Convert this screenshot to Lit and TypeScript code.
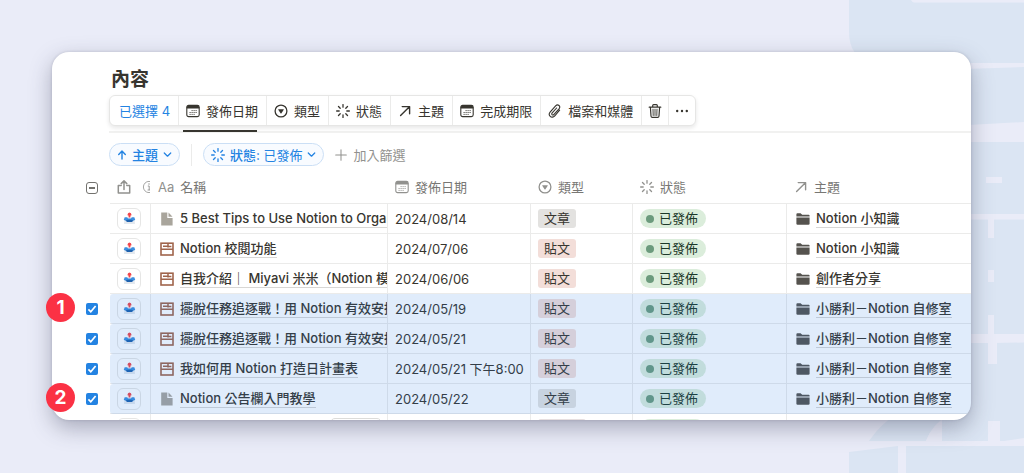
import { LitElement, html, svg, css, nothing } from "lit";
import { customElement, property } from "lit/decorators.js";

type Kind = "calendar" | "select" | "status" | "arrow" | "clip" | "trash" | "dots" | "share" | "info"
  | "up" | "down" | "plus" | "page" | "layout" | "folder" | "outbox";

const glyphs: Record<Kind, unknown> = {
  calendar: svg`<rect x=".8" y="1.4" width="12.4" height="11.2" rx="1.8" fill="none" stroke="currentColor" stroke-width="1.1"/>
    <path d="M.8 4.6V3.2Q.8 1.400 2.600 1.400H11.400Q13.200 1.400 13.200 3.200V4.600Z" fill="currentColor"/>
    <path d="M5.6 6.6h1M7.6 6.6h1M9.6 6.6h1M3.6 8.5h1M5.6 8.5h1M7.6 8.5h1M9.6 8.5h1M3.6 10.4h1M5.6 10.4h1M7.6 10.4h1" stroke="currentColor" stroke-width="1"/>`,
  select: svg`<circle cx="7" cy="7" r="5.9" fill="none" stroke="currentColor" stroke-width="1.3"/>
    <path d="M4.5 5.3h5a.3.3 0 0 1 .25.5L7.3 9.4a.4.4 0 0 1-.6 0L4.25 5.800a.3.3 0 0 1 .25-.5Z" fill="currentColor"/>`,
  status: svg`<path d="M7 .6v2.600M7 10.800v2.600M.6 7h2.600M10.800 7h2.600M2.500 2.500l1.700 1.700M9.800 9.800l1.700 1.700M2.500 11.500l1.700-1.700M9.800 4.200l1.700-1.700" stroke="currentColor" stroke-width="1.3" stroke-linecap="round"/>`,
  arrow: svg`<path d="M2.600 11.600L11.400 2.800M4.200 2.600H11.600V9.800" fill="none" stroke="currentColor" stroke-width="1.4" stroke-linecap="round" stroke-linejoin="round"/>`,
  clip: svg`<path d="M11.6 6.2L6.8 11.8C5.4 13.4 3.4 13.5 2.2 12.4C1 11.3 1 9.4 2.3 7.9L7.6 1.9C8.6.8 10.1.7 11 1.5C11.9 2.3 11.9 3.7 11 4.8L6 10.4C5.4 11.1 4.6 11.1 4.1 10.7C3.6 10.2 3.7 9.5 4.2 8.9L8.6 4" fill="none" stroke="currentColor" stroke-width="1.1" stroke-linecap="round"/>`,
  trash: svg`<path d="M1.200 3.200H12.800M4.700 3V1.600Q4.700.7 5.600.7H8.400Q9.300.7 9.300 1.600V3M2.400 3.400L3 12Q3.100 13.400 4.400 13.400H9.600Q10.900 13.400 11 12L11.600 3.400" fill="none" stroke="currentColor" stroke-width="1.2" stroke-linecap="round"/>
    <path d="M5 5.200L5.200 11.500M7 5.200V11.500M9 5.200L8.800 11.500" stroke="currentColor" stroke-width=".9" stroke-linecap="round"/>`,
  dots: svg`<circle cx="2.200" cy="7" r="1.200" fill="currentColor"/><circle cx="7" cy="7" r="1.200" fill="currentColor"/><circle cx="11.800" cy="7" r="1.200" fill="currentColor"/>`,
  share: svg`<path d="M4.200 5.600H1.300V13H12.700V5.600H9.800M7 9.400V1M4.200 3.600L7 .9L9.800 3.600" fill="none" stroke="currentColor" stroke-width="1.5" stroke-linecap="round" stroke-linejoin="round"/>`,
  info: svg`<circle cx="7" cy="7" r="5.600" fill="none" stroke="currentColor" stroke-width=".8"/>
    <path d="M5.800 6H7.200V10M5.600 10H8.800" fill="none" stroke="currentColor" stroke-width=".9"/><circle cx="7" cy="4" r=".7" fill="currentColor"/>`,
  up: svg`<path d="M7 12.600V1.600M2.400 6.200L7 1.500L11.600 6.200" fill="none" stroke="currentColor" stroke-width="2" stroke-linecap="round" stroke-linejoin="round"/>`,
  down: svg`<path d="M2 4.600L7 9.600L12 4.600" fill="none" stroke="currentColor" stroke-width="2" stroke-linecap="round" stroke-linejoin="round"/>`,
  plus: svg`<path d="M7 .8V13.200M.8 7H13.200" stroke="currentColor" stroke-width="1.2" stroke-linecap="round"/>`,
  page: svg`<path d="M1.200 .5H7.300V6H12.600V13.500H1.200Z" fill="currentColor"/><path d="M8.500 .6L12.500 4.700H8.500Z" fill="currentColor"/>`,
  layout: svg`<rect x="1" y="1.200" width="12" height="11.800" fill="none" stroke="currentColor" stroke-width="1.6"/>
    <path d="M1 7.200H13M8 1.400V5.400M3 4.300H8M8 4.600H11.400" stroke="currentColor" stroke-width="1.500"/>`,
  folder: svg`<path d="M.4 2.200Q.4 1.200 1.400 1.200H4.600L6.200 2.800H12.600Q13.600 2.800 13.600 3.800V4.600H.4Z" fill="currentColor"/>
    <path d="M.4 5.600H13.600V11.600Q13.600 12.800 12.400 12.800H1.600Q.4 12.800 .4 11.600Z" fill="currentColor"/>`,
  outbox: svg`<path d="M2 6.400H12L12.900 12Q12.900 12.900 12 12.900H2Q1.100 12.900 1.100 12Z" fill="#e3e8ee"/>
    <path d="M1.800 5.600H4.600L5.400 7H8.600L9.400 5.600H12.200L13.200 8.600Q11 9 10 10H4Q3 9 .8 8.600Z" fill="#3b8fe0"/>
    <path d="M2.600 8.800Q4 9.300 4.600 8.400H9.400Q10 9.300 11.400 8.800Q10.400 9.400 9.800 10.800H4.200Q3.600 9.400 2.600 8.800Z" fill="#1f62ad"/>
    <path d="M7 .6Q9 1 9.200 3.200Q9 3.900 8 3.900V5.800H6V3.900Q5 3.900 4.800 3.200Q5 1 7 .6Z" fill="#f2444b"/>`,
};

const icon = (kind: Kind, cls = "") =>
  html`<svg class="icon ${cls}" viewBox="0 0 14 14" aria-hidden="true">${glyphs[kind]}</svg>`;

interface Entry {
  name: string;
  mark: "page" | "layout";
  date: string;
  type: "文章" | "貼文";
  topic: string;
  picked: boolean;
}

const entries: Entry[] = [
  { name: "5 Best Tips to Use Notion to Organize", mark: "page", date: "2024/08/14", type: "文章", topic: "Notion 小知識", picked: false },
  { name: "Notion 校閱功能", mark: "layout", date: "2024/07/06", type: "貼文", topic: "Notion 小知識", picked: false },
  { name: "自我介紹｜ Miyavi 米米（Notion 模板", mark: "layout", date: "2024/06/06", type: "貼文", topic: "創作者分享", picked: false },
  { name: "擺脫任務追逐戰！用 Notion 有效安排", mark: "layout", date: "2024/05/19", type: "貼文", topic: "小勝利－Notion 自修室", picked: true },
  { name: "擺脫任務追逐戰！用 Notion 有效安排", mark: "layout", date: "2024/05/21", type: "貼文", topic: "小勝利－Notion 自修室", picked: true },
  { name: "我如何用 Notion 打造日計畫表", mark: "layout", date: "2024/05/21 下午8:00", type: "貼文", topic: "小勝利－Notion 自修室", picked: true },
  { name: "Notion 公告欄入門教學", mark: "page", date: "2024/05/22", type: "文章", topic: "小勝利－Notion 自修室", picked: true },
];

const actions: [Kind, string][] = [
  ["calendar", "發佈日期"], ["select", "類型"], ["status", "狀態"],
  ["arrow", "主題"], ["calendar", "完成期限"], ["clip", "檔案和媒體"],
];

const shared = css`
  * { box-sizing: border-box; }
  button { font: inherit; color: inherit; background: none; border: 0; padding: 0; margin: 0; }
  .icon { width: 14px; height: 14px; flex: none; display: block; }
`;

@customElement("content-toolbar")
export class ContentToolbar extends LitElement {
  static styles = [shared, css`
    :host { display: block; padding: 0 0 0 57px; }
    .bar {
      display: inline-flex; height: 31px; vertical-align: top; background: #fff;
      border: 1px solid #e6e6e5; border-radius: 6px; box-shadow: 0 2px 4px rgba(15, 15, 15, .1);
    }
    .item { display: flex; align-items: center; gap: 6px; padding: 0 8px 0 7px; border-left: 1px solid #ebebea; white-space: nowrap; }
    .count { color: #2383e2; padding: 0 8px 0 9px; border-left: 0; }
    .small { padding: 0 6px; }
    .tabs { height: 7px; border-bottom: 2px solid #f1f1f0; padding-left: 74px; display: flex; align-items: flex-end; }
    .current { width: 74px; height: 2px; background: #37352f; margin-bottom: -1px; }
    .filters { display: flex; align-items: center; padding-top: 10px; }
    .pill {
      display: flex; align-items: center; height: 23px; border-radius: 12px; padding: 0 7px;
      color: #2383e2; background: #f8fbff; border: 1px solid #cbdff5; gap: 5px; font-weight: 500; white-space: nowrap;
    }
    .value { font-weight: 400; }
    .rule { width: 1px; height: 22px; background: #ebebea; margin: 0 11px; }
    .chev { width: 9px; height: 9px; }
    .up { width: 10px; height: 10px; }
    .plus { width: 12px; height: 12px; }
    .add { display: flex; align-items: center; gap: 6px; color: #91918e; margin-left: 11px; }
  `];

  render() {
    return html`
      <div class="bar" role="toolbar" aria-label="已選擇 4">
        <button class="item count">已選擇 4</button>
        ${actions.map(([kind, label]) => html`<button class="item">${icon(kind)}${label}</button>`)}
        <button class="item small" aria-label="刪除">${icon("trash")}</button>
        <button class="item small" aria-label="更多">${icon("dots")}</button>
      </div>
      <div class="tabs"><div class="current"></div></div>
      <div class="filters">
        <button class="pill">${icon("up", "up")}主題${icon("down", "chev")}</button>
        <span class="rule"></span>
        <button class="pill">${icon("status")}<span>狀態: <span class="value">已發佈</span></span>${icon("down", "chev")}</button>
        <button class="add">${icon("plus", "plus")}加入篩選</button>
      </div>`;
  }
}

@customElement("content-table")
export class ContentTable extends LitElement {
  @property({ attribute: false }) rows: Entry[] = [];

  static styles = [shared, css`
    :host { display: block; }
    table { width: 100%; table-layout: fixed; border-collapse: separate; border-spacing: 0; }
    .c-pick { width: 58px; }
    .c-act { width: 40px; }
    .c-name { width: 237px; }
    .c-date { width: 143px; }
    .c-type { width: 102px; }
    .c-status { width: 154px; }
    th, td { padding: 0 8px; text-align: left; font-weight: 400; white-space: nowrap; overflow: hidden; border-bottom: 1px solid #ebebea; }
    th { height: 33px; color: #787774; }
    th .icon { color: #91918e; }
    td { height: 30px; padding: 0 7px; border-left: 1px solid #ebebea; }
    .titled { padding: 0 0 0 9px; }
    .pick { border: 0; padding: 0 0 0 34px; }
    .first { border-left: 0; padding: 0 0 0 7px; }
    .line { display: flex; align-items: center; gap: 6px; }
    .line.tight { gap: 11px; }
    .aa { color: #91918e; }
    .send {
      width: 24px; height: 22px; border: 1px solid #e6e6e5; border-radius: 6px;
      display: flex; align-items: center; justify-content: center;
    }
    .send .icon { width: 13px; height: 13px; }
    .link { color: inherit; text-decoration: none; font-weight: 500; line-height: 18px; border-bottom: 1px solid #d8d7d5; }
    .page { color: #a9a59c; }
    .layout { color: #a0654c; }
    .folder { color: #55534e; }
    .tag { display: block; width: max-content; padding: 0 6px; border-radius: 3px; line-height: 19px; height: 19px; background: #e3e2e0; }
    .tag.post { background: #f3ded9; }
    .state {
      display: flex; align-items: center; gap: 5px; width: max-content; height: 19px; padding: 0 8px 0 6px;
      border-radius: 10px; background: #dbeddb; color: #1c3829; line-height: 19px;
    }
    .dot { width: 8px; height: 8px; border-radius: 50%; background: #6c9b7d; }
    .picked { position: relative; }
    .picked .pick::after {
      content: ""; position: absolute; inset: 0 0 0 58px; border-radius: 3px 0 0 3px;
      background: rgba(35, 122, 226, .14); pointer-events: none;
    }
    .box {
      appearance: none; display: block; margin: 0; width: 12px; height: 12px; border-radius: 2px;
      background: #2383e2 url('data:image/svg+xml,<svg xmlns="http://www.w3.org/2000/svg" viewBox="0 0 12 12"><path d="M2.4 6.4L4.8 8.8L9.6 3" fill="none" stroke="white" stroke-width="1.7"/></svg>');
    }
    .box.some {
      border: 1px solid #73726e; border-radius: 3px;
      background: #fff linear-gradient(#73726e, #73726e) center / 6px 2px no-repeat;
    }
    .peek td { height: 6px; border-bottom: 0; vertical-align: top; }
    .clip { height: 6px; overflow: hidden; padding-top: 4px; }
    .low { padding-top: 5px; }
    .open { width: 52px; height: 20px; border: 1px solid #dcdcda; border-radius: 5px; margin-left: auto; margin-right: -2px; }
    .shape { width: 48px; height: 19px; border-radius: 3px; background: #e6dfe0; }
    .shape.round { width: 65px; border-radius: 10px; background: #dbeddb; }
  `];

  private head(kind: Kind, label: string) {
    return html`<th scope="col"><div class="line">${icon(kind)}${label}</div></th>`;
  }

  private row(e: Entry) {
    return html`
      <tr class=${e.picked ? "picked" : ""}>
        <td class="pick">${e.picked ? html`<input class="box" type="checkbox" checked aria-label=${e.name}>` : nothing}</td>
        <td class="first"><button class="send" aria-label="發佈">${icon("outbox")}</button></td>
        <td class="titled"><div class="line">${icon(e.mark, e.mark)}<a class="link" href="#">${e.name}</a></div></td>
        <td>${e.date}</td>
        <td><span class="tag ${e.type === "貼文" ? "post" : ""}">${e.type}</span></td>
        <td><span class="state"><span class="dot"></span>已發佈</span></td>
        <td class="titled"><div class="line">${icon("folder", "folder")}<a class="link" href="#">${e.topic}</a></div></td>
      </tr>`;
  }

  render() {
    return html`
      <table>
        <colgroup>
          <col class="c-pick"><col class="c-act"><col class="c-name"><col class="c-date">
          <col class="c-type"><col class="c-status"><col>
        </colgroup>
        <thead>
          <tr>
            <th class="pick"><input class="box some" type="checkbox" .indeterminate=${true} aria-label="全選"></th>
            <th class="first"><div class="line tight">${icon("share")}${icon("info")}</div></th>
            <th scope="col"><div class="line"><span class="aa">Aa</span>名稱</div></th>
            ${this.head("calendar", "發佈日期")}
            ${this.head("select", "類型")}
            ${this.head("status", "狀態")}
            ${this.head("arrow", "主題")}
          </tr>
        </thead>
        <tbody>
          ${this.rows.map((e) => this.row(e))}
          <tr class="peek" aria-hidden="true">
            <td class="pick"></td>
            <td class="first"><div class="clip"><div class="send"></div></div></td>
            <td><div class="clip"><div class="open"></div></div></td>
            <td></td>
            <td><div class="clip low"><div class="shape"></div></div></td>
            <td><div class="clip low"><div class="shape round"></div></div></td>
            <td></td>
          </tr>
        </tbody>
      </table>`;
  }
}

@customElement("app-root")
export class AppRoot extends LitElement {
  static styles = [shared, css`
    :host {
      display: block; position: relative; min-height: 100vh; box-sizing: border-box; overflow: hidden;
      padding: 52px 53px 52px 52px; background: #eaecf8; color: #37352f;
      font: 400 13px/20px Inter, "Noto Sans CJK TC", sans-serif;
    }
    .pattern { position: absolute; top: 0; right: 0; width: 180px; height: 473px; }
    .frame { position: relative; }
    .card {
      overflow: hidden; border-radius: 17px; background: #fff; padding-top: 15px;
      box-shadow: 0 0 3px rgba(60, 62, 90, .2), 0 8px 22px rgba(60, 62, 90, .38);
    }
    .title { margin: 0 0 2px 59px; font-size: 19px; line-height: 26px; font-weight: 600; }
    .grid { display: block; margin-top: 5px; }
    .step {
      position: absolute; left: -6px; width: 29px; height: 29px; border-radius: 50%;
      background: #fb3144; color: #fff; font-size: 19px; line-height: 29px; font-weight: 700; text-align: center;
    }
    .one { top: 241px; }
    .two { top: 331px; }
  `];

  render() {
    return html`
      <svg class="pattern" viewBox="844 0 180 473" aria-hidden="true">
        <g fill="#dbe5f3">
          <path d="M849 0H911Q912 2 914 2.500H1024V63H870Q849 56 849 32Z"/>
          <path d="M950 69.500L1024 67V122L950 126Z"/>
          <path d="M940 142H1024V214H940Z"/>
          <path d="M940 219.500H1024V334H940Z"/>
          <path d="M940 343H994L1024 342.500V438L1004 441H942V343Z"/>
          <path d="M869 441Q880 425 894 416H948Q932 424 926 441Z"/>
          <path d="M849 452L898 446V473H849Z"/>
          <path d="M906 446H1024V473H906Z"/>
        </g>
        <g fill="#eaecf8">
          <rect x="986" y="177" width="16" height="6"/>
          <rect x="988" y="219" width="6" height="19"/>
          <rect x="988" y="270" width="6" height="12"/>
          <rect x="988" y="315" width="6" height="20"/>
          <rect x="988" y="334" width="9" height="30"/>
          <rect x="988" y="421" width="12" height="21"/>
          <path d="M926 441Q931 428 942 422V441Z"/>
        </g>
      </svg>
      <main class="frame">
        <section class="card">
          <h1 class="title">內容</h1>
          <content-toolbar></content-toolbar>
          <content-table class="grid" .rows=${entries}></content-table>
        </section>
        <span class="step one">1</span>
        <span class="step two">2</span>
      </main>`;
  }
}
